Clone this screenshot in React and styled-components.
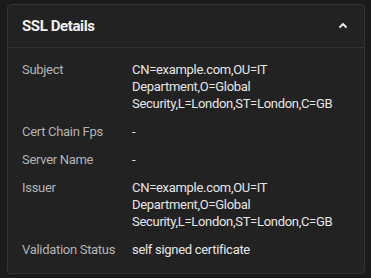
import React from 'react';
import styled, { createGlobalStyle } from 'styled-components';

const GlobalStyle = createGlobalStyle`
  html, body {
    margin: 0;
    background: #1b1b1b;
  }
  body {
    font-family: Roboto, "Noto Sans", sans-serif;
    -webkit-font-smoothing: antialiased;
  }
`;

const Page = styled.div`
  padding: 4px 6px 4px 7px;
`;

const Card = styled.section`
  background: #222222;
  border: 1px solid #333333;
  border-radius: 4px;
  height: 270px;
  box-sizing: border-box;
`;

const Header = styled.header`
  display: flex;
  align-items: center;
  justify-content: space-between;
  height: 42px;
  padding: 0 16px 0 14px;
  border-bottom: 1px solid #333333;
`;

const Title = styled.h2`
  margin: 0;
  color: #f2f2f2;
  font-size: 15px;
  font-weight: 700;
  letter-spacing: -0.4px;
`;

const Toggle = styled.button`
  background: none;
  border: none;
  padding: 0;
  display: flex;
  color: #f2f2f2;
  cursor: pointer;
`;

const Body = styled.dl`
  margin: 0;
  padding: 13px 14px 0 14px;
  display: grid;
  grid-template-columns: 110px 1fr;
  row-gap: 11px;
  font-size: 13px;
  line-height: 17px;
  letter-spacing: -0.3px;
`;

const Label = styled.dt`
  color: #b3b3b3;
`;

const Value = styled.dd`
  margin: 0;
  color: #e6e6e6;
  padding-right: 10px;
`;

const rows = [
  ['Subject', 'CN=example.com,OU=IT Department,O=Global Security,L=London,ST=London,C=GB'],
  ['Cert Chain Fps', '-'],
  ['Server Name', '-'],
  ['Issuer', 'CN=example.com,OU=IT Department,O=Global Security,L=London,ST=London,C=GB'],
  ['Validation Status', 'self signed certificate'],
];

const ChevronUp = () => (
  <svg width="10" height="10" viewBox="0 0 10 10" fill="none">
    <path d="M1.5 6.5 L5 3 L8.5 6.5" stroke="currentColor" strokeWidth="1.8" />
  </svg>
);

export default function App() {
  return (
    <Page>
      <GlobalStyle />
      <Card>
        <Header>
          <Title>SSL Details</Title>
          <Toggle aria-label="Collapse">
            <ChevronUp />
          </Toggle>
        </Header>
        <Body>
          {rows.map(([label, value]) => (
            <React.Fragment key={label}>
              <Label>{label}</Label>
              <Value>{value}</Value>
            </React.Fragment>
          ))}
        </Body>
      </Card>
    </Page>
  );
}
